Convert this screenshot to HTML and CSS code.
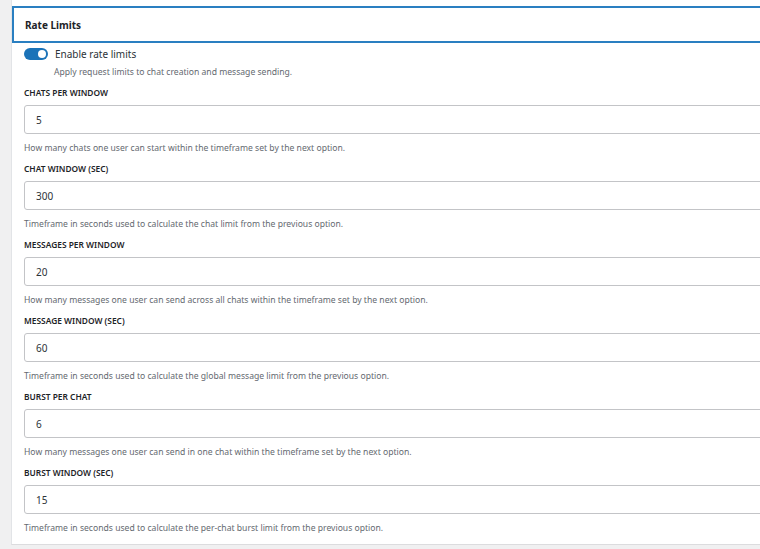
FILE: index.html
```html
<!DOCTYPE html>
<html lang="en">
<head>
  <meta charset="UTF-8">
  <title>Rate Limits</title>
  <link rel="stylesheet" href="styles.css">
</head>
<body>
  <div class="panel">
    <div class="panel-head">Rate Limits</div>

    <div class="toggle-row">
      <span class="toggle"><span class="knob"></span></span>
      <span class="toggle-label">Enable rate limits</span>
    </div>
    <p class="toggle-help">Apply request limits to chat creation and message sending.</p>

    <div class="field">
      <label class="field-label">Chats per window</label>
      <input class="field-input" type="text" value="5">
      <p class="field-help">How many chats one user can start within the timeframe set by the next option.</p>
    </div>

    <div class="field">
      <label class="field-label">Chat window (sec)</label>
      <input class="field-input" type="text" value="300">
      <p class="field-help">Timeframe in seconds used to calculate the chat limit from the previous option.</p>
    </div>

    <div class="field">
      <label class="field-label">Messages per window</label>
      <input class="field-input" type="text" value="20">
      <p class="field-help">How many messages one user can send across all chats within the timeframe set by the next option.</p>
    </div>

    <div class="field">
      <label class="field-label">Message window (sec)</label>
      <input class="field-input" type="text" value="60">
      <p class="field-help">Timeframe in seconds used to calculate the global message limit from the previous option.</p>
    </div>

    <div class="field">
      <label class="field-label">Burst per chat</label>
      <input class="field-input" type="text" value="6">
      <p class="field-help">How many messages one user can send in one chat within the timeframe set by the next option.</p>
    </div>

    <div class="field">
      <label class="field-label">Burst window (sec)</label>
      <input class="field-input" type="text" value="15">
      <p class="field-help">Timeframe in seconds used to calculate the per-chat burst limit from the previous option.</p>
    </div>
  </div>
</body>
</html>
```

FILE: styles.css
```css
body {
  margin: 0;
  background-color: #f0f0f1;
  font-family: 'Noto Sans', sans-serif;
  color: #1d2327;
  overflow: hidden;
}

.panel {
  margin: 0 0 0 11px;
  width: 780px;
  height: 545px;
  padding-top: 6px;
  background-color: #fff;
  border-left: 1px solid #e2e4e7;
  border-bottom: 1px solid #dcdcde;
  box-sizing: border-box;
}

.panel-head {
  height: 37px;
  box-sizing: border-box;
  border: 2px solid #2a7fc1;
  border-right: none;
  padding-left: 11px;
  display: flex;
  align-items: center;
  font-size: 10px;
  font-weight: 700;
}

.toggle-row {
  display: flex;
  align-items: center;
  gap: 7px;
  margin: 4px 0 0 12px;
  height: 14px;
}

.toggle {
  width: 24px;
  height: 12px;
  border-radius: 6px;
  background-color: #1b73b8;
  position: relative;
}

.knob {
  position: absolute;
  right: 2px;
  top: 2px;
  width: 8px;
  height: 8px;
  border-radius: 50%;
  background-color: #fff;
}

.toggle-label {
  font-size: 10px;
  color: #2c3338;
}

.toggle-help {
  margin: 5px 0 0 42px;
  font-size: 8.6px;
  color: #646970;
  height: 12px;
}

.field {
  margin-left: 12px;
}

.field-label {
  display: block;
  text-transform: uppercase;
  font-size: 8.4px;
  font-weight: 600;
  margin-top: 9px;
  height: 11px;
  line-height: 11px;
}

.field-input {
  display: block;
  margin-top: 7px;
  width: 800px;
  height: 29px;
  box-sizing: border-box;
  border: 1px solid #c3c4c7;
  border-radius: 3px;
  padding: 0 11px;
  font-family: inherit;
  font-size: 10px;
  color: #2c3338;
  background: #fff;
}

.field-help {
  margin: 8px 0 0;
  font-size: 8.6px;
  line-height: 12px;
  color: #646970;
  height: 12px;
}
```
